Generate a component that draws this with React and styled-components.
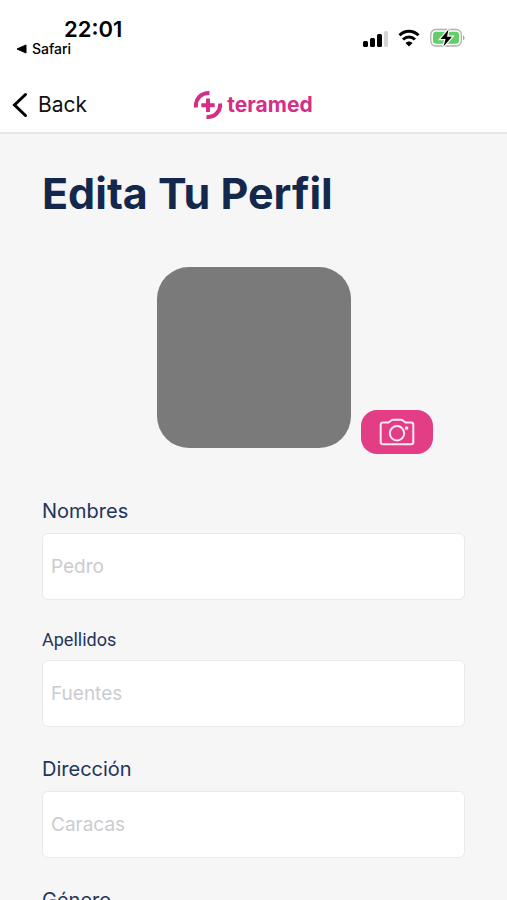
import styled, { createGlobalStyle } from 'styled-components'

const GlobalStyle = createGlobalStyle`
    * { box-sizing: border-box; }
    body {
        margin: 0;
        background-color: #F6F6F6;
        font-family: Inter, 'Liberation Sans', sans-serif;
    }
`

const Screen = styled.div`
    height: 100vh;
    display: flex;
    flex-direction: column;
`

const StatusBar = styled.div`
    background-color: #FFF;
    height: 76px;
    flex-shrink: 0;
    padding: 16px 42px 0 16px;
    display: flex;
    justify-content: space-between;
    align-items: flex-start;
    color: #000;
`

const StatusLeft = styled.div`
    display: flex;
    flex-direction: column;
`

const Time = styled.span`
    padding-left: 48px;
    font-size: 22px;
    line-height: 26px;
    font-weight: 600;
`

const ReturnLink = styled.a`
    display: flex;
    align-items: center;
    gap: 5px;
    font-size: 14px;
    line-height: 14px;
    font-weight: 500;
    color: #000;
    text-decoration: none;
`

const StatusIcons = styled.div`
    display: flex;
    align-items: center;
    gap: 10px;
    padding-top: 12px;
`

const Header = styled.header`
    background-color: #FFF;
    height: 58px;
    flex-shrink: 0;
    border-bottom: 2px solid #E6E6E6;
    padding: 2px 12px 0;
    display: grid;
    grid-template-columns: 1fr auto 1fr;
    align-items: center;
`

const BackButton = styled.button`
    justify-self: start;
    display: flex;
    align-items: center;
    gap: 10px;
    padding: 0;
    border: none;
    background: none;
    color: #111;
    font-family: inherit;
    font-size: 21px;
    line-height: 28px;
`

const Brand = styled.div`
    display: flex;
    align-items: center;
    gap: 5px;
    color: #D62E86;
    font-size: 21px;
    line-height: 28px;
    font-weight: 700;
`

const Main = styled.main`
    flex: 1;
    min-height: 0;
    overflow-y: auto;
    scrollbar-width: none;
    padding: 32px 42px 0;
`

const Title = styled.h1`
    margin: 0;
    color: #13284C;
    font-size: 43px;
    line-height: 54px;
    font-weight: 700;
`

const PhotoRow = styled.div`
    display: grid;
    grid-template-columns: 1fr auto 1fr;
    align-items: end;
    column-gap: 10px;
    margin: 47px 0 45px;
`

const Photo = styled.div`
    grid-column: 2;
    width: 194px;
    height: 181px;
    margin-bottom: 6px;
    border-radius: 32px;
    background-color: #7A7A7A;
`

const CameraButton = styled.button`
    justify-self: start;
    width: 72px;
    height: 44px;
    padding: 0;
    display: flex;
    justify-content: center;
    align-items: center;
    border: none;
    border-radius: 16px;
    background-color: #E33D85;
    color: #FFE9F3;
`

const Form = styled.form`
    display: flex;
    flex-direction: column;
    gap: 30px;
`

const Field = styled.div`
    display: flex;
    flex-direction: column;
    gap: 10px;
`

const Label = styled.label`
    color: #1F3559;
    font-family: ${({ $compact }) => $compact ? "Roboto, 'Liberation Sans', sans-serif" : "Inter, 'Liberation Sans', sans-serif"};
    font-size: ${({ $compact }) => $compact ? '18px' : '20px'};
    line-height: ${({ $compact }) => $compact ? '20px' : '24px'};
    font-weight: 400;
`

const Input = styled.input`
    width: 100%;
    height: 67px;
    padding: 0 8px;
    border: 1px solid #E9E9E9;
    border-radius: 6px;
    background-color: #FFF;
    color: #263B5E;
    font-family: inherit;
    font-size: 19px;
    &::placeholder {
        color: #CBCCD0;
        opacity: 1;
    }
`

const fields = [
    { id: 'nombres', label: 'Nombres', placeholder: 'Pedro' },
    { id: 'apellidos', label: 'Apellidos', placeholder: 'Fuentes', compact: true },
    { id: 'direccion', label: 'Dirección', placeholder: 'Caracas' },
    { id: 'genero', label: 'Género', placeholder: '' },
]

function SignalIcon() {
    return (
        <svg width='26' height='18' viewBox='0 0 26 18' aria-hidden='true'>
            <rect x='1' y='12' width='5' height='6' rx='1.5' />
            <rect x='8' y='9' width='5' height='9' rx='1.5' />
            <rect x='15' y='5' width='5' height='13' rx='1.5' />
            <rect x='22' y='2' width='4' height='16' rx='1.5' fill='#D5D5D5' />
        </svg>
    )
}

function WifiIcon() {
    return (
        <svg width='22' height='18' viewBox='0 0 22 18' fill='none' stroke='#000' strokeWidth='3' aria-hidden='true'>
            <path d='M1.5 6.2C7 .8 15 .8 20.500 6.200' />
            <path d='M5 10.500C8.400 7.200 13.600 7.200 17 10.500' />
            <path d='M7.500 14C9.600 12 12.400 12 14.500 14L11 17.600Z' fill='#000' stroke='none' />
        </svg>
    )
}

function BatteryIcon() {
    return (
        <svg width='35' height='20' viewBox='0 0 35 20' aria-hidden='true'>
            <rect x='.8' y='1.500' width='30.500' height='16.500' rx='5' fill='#FFF' stroke='#B0B0B0' strokeWidth='1.300' />
            <rect x='3' y='3.700' width='26' height='12' rx='3' fill='#62CE68' />
            <path d='M33 7.500c2 .7 2 4 0 4.700z' fill='#A5A5A5' />
            <path d='M18.500 1.500L10.500 11h5l-2 7.500L22 8.700h-5z' stroke='#FFF' strokeWidth='2.500' />
            <path d='M18.500 1.500L10.500 11h5l-2 7.500L22 8.700h-5z' />
        </svg>
    )
}

function LogoIcon() {
    return (
        <svg width='28' height='30' viewBox='0 0 28 30' fill='none' stroke='#D62E86' strokeWidth='4' aria-hidden='true'>
            <path d='M2 17.500C1 9 7 2.800 15.500 3' />
            <path d='M26 13.500C27 21 21 27.500 12.500 27' />
            <path d='M14 8.500V22M7.300 15.200H20.700' />
        </svg>
    )
}

function CameraIcon() {
    return (
        <svg width='36' height='28' viewBox='0 0 36 28' fill='none' stroke='currentColor' strokeWidth='2' strokeLinejoin='round' aria-hidden='true'>
            <path d='M4 4.500H9.500L12.500 2.300Q13.200 1.700 14.200 1.700H21.800Q22.800 1.700 23.500 2.300L26.500 4.500H32Q34.300 4.500 34.300 6.800V24Q34.300 26.300 32 26.300H4Q1.700 26.300 1.700 24V6.800Q1.700 4.500 4 4.500Z' />
            <circle cx='18' cy='15.300' r='7.200' />
            <rect x='26.500' y='9' width='2.200' height='2.200' fill='currentColor' strokeWidth='1' />
        </svg>
    )
}

function App() {
    return (
        <>
            <GlobalStyle />
            <Screen>
                <StatusBar>
                    <StatusLeft>
                        <Time>22:01</Time>
                        <ReturnLink href='#'>
                            <svg width='11' height='10' viewBox='0 0 11 10' aria-hidden='true'><path d='M1 5L10 1V9Z' stroke='#000' strokeLinejoin='round' /></svg>
                            Safari
                        </ReturnLink>
                    </StatusLeft>
                    <StatusIcons>
                        <SignalIcon />
                        <WifiIcon />
                        <BatteryIcon />
                    </StatusIcons>
                </StatusBar>
                <Header>
                    <BackButton type='button'>
                        <svg width='16' height='26' viewBox='0 0 16 26' fill='none' stroke='#000' strokeWidth='3' strokeLinecap='round' aria-hidden='true'><path d='M13.500 2.500L2.500 13L13.500 23.500' /></svg>
                        Back
                    </BackButton>
                    <Brand><LogoIcon />teramed</Brand>
                </Header>
                <Main>
                    <Title>Edita Tu Perfil</Title>
                    <PhotoRow>
                        <Photo role='img' aria-label='Foto de perfil' />
                        <CameraButton type='button' aria-label='Cambiar foto'><CameraIcon /></CameraButton>
                    </PhotoRow>
                    <Form>
                        {fields.map((field) => (
                            <Field key={field.id}>
                                <Label htmlFor={field.id} $compact={field.compact}>{field.label}</Label>
                                <Input id={field.id} type='text' placeholder={field.placeholder} />
                            </Field>
                        ))}
                    </Form>
                </Main>
            </Screen>
        </>
    );
}

export default App;
